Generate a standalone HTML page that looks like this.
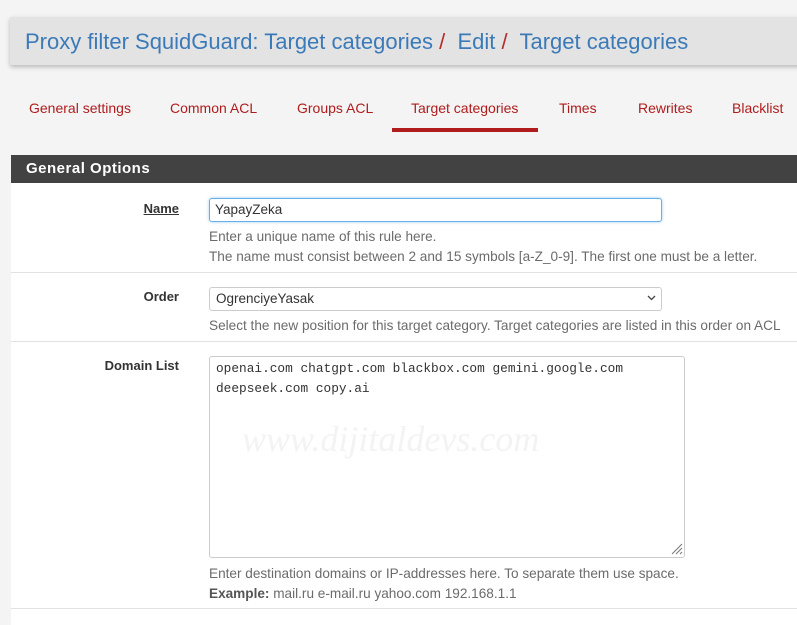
<!DOCTYPE html>
<html><head><meta charset="utf-8"><style>
body{margin:0;width:797px;height:620px;overflow:hidden;background:#f4f4f4;font-family:"Liberation Sans",Arial,sans-serif;position:relative}
.a{position:absolute;white-space:nowrap}
.hdr{left:10px;top:17px;width:800px;height:48px;background:#e3e3e3;box-shadow:0 2px 5px rgba(0,0,0,.25);border-radius:2px}
.title{left:25px;top:29px;font-size:22px;color:#3b7ab8}
.title b{color:#b42c2c;font-weight:normal}
.tab{top:100px;font-size:14px;color:#b01c1c}
.panel{left:11px;top:155px;width:800px;height:470px;background:#fff}
.ph{left:11px;top:155px;width:800px;height:28px;background:#424242;color:#fff;font-weight:bold;font-size:15px;letter-spacing:.5px;line-height:28px;padding-left:15px;box-sizing:border-box}
.lbl{font-size:13px;font-weight:bold;color:#333;text-align:right;width:170px;left:9px}
.help{font-size:13.6px;color:#6b6b6b;left:209px}
.inp{border:1px solid #ccc;border-radius:3px;background:#fff;box-sizing:border-box}
.hr{left:11px;width:800px;height:1px;background:#e2e2e2}
</style></head><body>
<div class="a hdr"></div>
<div class="a title">Proxy filter SquidGuard: Target categories <b>/</b>&nbsp; Edit <b>/</b>&nbsp; Target categories</div>
<div class="a tab" style="left:29px">General settings</div>
<div class="a tab" style="left:170px">Common ACL</div>
<div class="a tab" style="left:297px">Groups ACL</div>
<div class="a tab" style="left:411px">Target categories</div>
<div class="a" style="left:392px;top:128px;width:146px;height:4px;background:#b01c1c"></div>
<div class="a tab" style="left:559px">Times</div>
<div class="a tab" style="left:638px">Rewrites</div>
<div class="a tab" style="left:732px">Blacklist</div>
<div class="a panel"></div>
<div class="a ph">General Options</div>
<div class="a lbl" style="top:201px"><span style="text-decoration:underline">Name</span></div>
<div class="a inp" style="left:209px;top:198px;width:453px;height:24px;border-color:#66afe9;box-shadow:0 0 3px rgba(102,175,233,.6)"></div>
<div class="a" style="left:215px;top:202px;font-size:13.5px;color:#333">YapayZeka</div>
<div class="a help" style="top:229px">Enter a unique name of this rule here.</div>
<div class="a help" style="top:249px">The name must consist between 2 and 15 symbols [a-Z_0-9]. The first one must be a letter.</div>
<div class="a hr" style="top:272px"></div>
<div class="a lbl" style="top:289px">Order</div>
<div class="a inp" style="left:209px;top:287px;width:453px;height:24px"></div>
<div class="a" style="left:216px;top:291px;font-size:13.5px;color:#333">OgrenciyeYasak</div>
<svg class="a" style="left:647px;top:295px" width="9" height="6"><path d="M1 1L4.5 4.5L8 1" stroke="#444" stroke-width="1.3" fill="none"/></svg>
<div class="a help" style="top:318px">Select the new position for this target category. Target categories are listed in this order on ACL</div>
<div class="a hr" style="top:341px"></div>
<div class="a lbl" style="top:358px">Domain List</div>
<div class="a inp" style="left:209px;top:356px;width:476px;height:202px"></div>
<svg class="a" style="left:670px;top:542px" width="13" height="13"><path d="M2 12L12 2M6 12L12 6M10 12L12 10" stroke="#777" stroke-width="1"/></svg>
<div class="a" style="left:216px;top:359px;font-family:'Liberation Mono',monospace;font-size:12.8px;color:#333;line-height:20px">openai.com chatgpt.com blackbox.com gemini.google.com<br>deepseek.com copy.ai</div>
<div class="a" style="left:242px;top:418px;font-size:36px;font-style:italic;color:#f3f3f3;font-family:'Liberation Serif',serif">www.dijitaldevs.com</div>
<div class="a help" style="top:566px">Enter destination domains or IP-addresses here. To separate them use space.</div>
<div class="a help" style="top:586px"><b style="color:#555">Example:</b> mail.ru e-mail.ru yahoo.com 192.168.1.1</div>
<div class="a hr" style="top:608px"></div>
</body></html>
